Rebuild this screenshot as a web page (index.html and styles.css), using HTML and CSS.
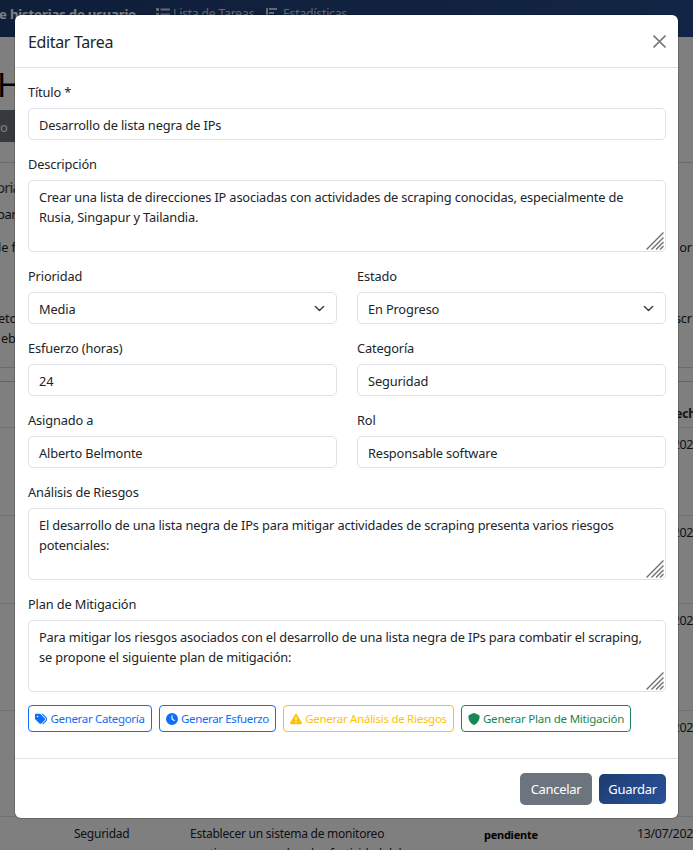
FILE: index.html
```html
<!DOCTYPE html>
<html lang="es">
<head>
<meta charset="utf-8">
<title>Editar Tarea</title>
<link rel="stylesheet" href="styles.css">
</head>
<body>
<div class="page">
  <nav class="navbar">
    <span class="brand">e historias de usuario</span>
    <span class="nav-link nav-tasks"><svg width="14" height="14" viewBox="0 0 14 14"><path d="M0 1h3v3H0zM0 6h3v3H0zM0 11h3v3H0zM4.500 1.500h9.500v2H4.500zM4.500 6.500h9.500v2H4.500zM4.500 11h9.500v2H4.500z"/></svg><span>Lista de Tareas</span></span>
    <span class="nav-link nav-stats"><svg width="12" height="14" viewBox="0 0 12 14"><path d="M0 1h2v13H0zM3 1h8v2H3zM3 5h5v2H3zM3 9h9v2H3z"/></svg><span>Estadísticas</span></span>
  </nav>
  <h1 class="heading">H</h1>
  <div class="toolbar">o</div>
  <section class="story">
    <div class="story-line story-title">oria</div>
    <div class="story-line story-need">par</div>
    <div class="story-line story-wide"><span>le f</span><span>or</span></div>
    <div class="story-line story-goal"><span>eto</span><span>scr</span></div>
    <div class="story-line story-last">eb</div>
  </section>
  <section class="table">
    <div class="row row-head"><b></b><b></b><b></b><b class="date-head">Fecha</b></div>
    <div class="row"><span></span><span></span><span></span><span class="date">13/07/2025</span></div>
    <div class="row"><span></span><span></span><span></span><span class="date">13/07/2025</span></div>
    <div class="row"><span></span><span></span><span></span><span class="date">13/07/2025</span></div>
    <div class="row"><span></span><span></span><span></span><span class="date">13/07/2025</span></div>
    <div class="row"><span>Seguridad</span><span class="desc">Establecer un sistema de monitoreo<br>continuo para evaluar la efectividad del</span><b class="status">pendiente</b><span class="date">13/07/2025</span></div>
  </section>
</div>
<div class="backdrop"></div>
<main class="modal">
  <header class="modal-header">
    <h2 class="modal-title">Editar Tarea</h2>
    <svg class="close" width="13" height="13" viewBox="0 0 13 13"><path d="M.5.5l12 12M12.500.5L.5 12.500"/></svg>
  </header>
  <div class="modal-body">
    <div class="field"><label>Título *</label><div class="control"><span>Desarrollo de lista negra de IPs</span></div></div>
    <div class="field"><label>Descripción</label><div class="control area"><span>Crear una lista de direcciones IP asociadas con actividades de scraping conocidas, especialmente de</span><br><span>Rusia, Singapur y Tailandia.</span><svg class="grip" viewBox="0 0 18 18"><path d="M.5 17.500l17-17M5.500 17.500l12-12M10 17.500l7.500-7.500M14 17.500l3.500-3.500"/></svg></div></div>
    <div class="pair">
      <div class="field"><label>Prioridad</label><div class="control select"><span>Media</span><svg width="11" height="11" viewBox="0 0 16 16"><path d="m2 5 6 6 6-6"/></svg></div></div>
      <div class="field"><label>Estado</label><div class="control select"><span>En Progreso</span><svg width="11" height="11" viewBox="0 0 16 16"><path d="m2 5 6 6 6-6"/></svg></div></div>
    </div>
    <div class="pair">
      <div class="field"><label>Esfuerzo (horas)</label><div class="control"><span>24</span></div></div>
      <div class="field"><label>Categoría</label><div class="control"><span>Seguridad</span></div></div>
    </div>
    <div class="pair">
      <div class="field"><label>Asignado a</label><div class="control"><span>Alberto Belmonte</span></div></div>
      <div class="field"><label>Rol</label><div class="control"><span>Responsable software</span></div></div>
    </div>
    <div class="field"><label>Análisis de Riesgos</label><div class="control area"><span>El desarrollo de una lista negra de IPs para mitigar actividades de scraping presenta varios riesgos</span><br><span>potenciales:</span><svg class="grip" viewBox="0 0 18 18"><path d="M.5 17.500l17-17M5.500 17.500l12-12M10 17.500l7.500-7.500M14 17.500l3.500-3.500"/></svg></div></div>
    <div class="field"><label>Plan de Mitigación</label><div class="control area"><span>Para mitigar los riesgos asociados con el desarrollo de una lista negra de IPs para combatir el scraping,</span><br><span>se propone el siguiente plan de mitigación:</span><svg class="grip" viewBox="0 0 18 18"><path d="M.5 17.500l17-17M5.500 17.500l12-12M10 17.500l7.500-7.500M14 17.500l3.500-3.500"/></svg></div></div>
    <div class="generators">
      <div class="gen gen-category"><svg width="12" height="12" viewBox="0 0 512 512"><path d="M345 39.100L472.800 168.400c52.400 53 52.400 138.200 0 191.200L360.800 472.900c-9.300 9.400-24.500 9.500-33.900.2s-9.500-24.500-.2-33.900L438.600 325.900c33.900-34.300 33.900-89.400 0-123.700L310.900 72.900c-9.300-9.400-9.200-24.600.2-33.900s24.600-9.200 33.900.2zM0 229.500V80C0 53.500 21.500 32 48 32H197.500c17 0 33.300 6.700 45.300 18.700l168 168c25 25 25 65.500 0 90.500L277.300 442.700c-25 25-65.500 25-90.500 0l-168-168C6.700 262.700 0 246.500 0 229.500zM144 144a32 32 0 1 0-64 0 32 32 0 1 0 64 0z"/></svg><span>Generar Categoría</span></div>
      <div class="gen gen-effort"><svg width="12" height="12" viewBox="0 0 512 512"><path d="M256 0a256 256 0 1 1 0 512A256 256 0 1 1 256 0zM232 120V256c0 8 4 15.500 10.700 20l96 64c11 7.400 25.900 4.400 33.300-6.700s4.400-25.900-6.700-33.300L280 243.200V120c0-13.300-10.700-24-24-24s-24 10.700-24 24z"/></svg><span>Generar Esfuerzo</span></div>
      <div class="gen gen-risk"><svg width="12" height="12" viewBox="0 0 512 512"><path d="M256 32c14.200 0 27.300 7.500 34.500 19.800l216 368c7.300 12.400 7.300 27.700.2 40.100S486.300 480 472 480H40c-14.300 0-27.600-7.700-34.700-20.100s-7-27.800.2-40.100l216-368C228.700 39.500 241.800 32 256 32zm0 128c-13.300 0-24 10.700-24 24V296c0 13.300 10.700 24 24 24s24-10.700 24-24V184c0-13.300-10.700-24-24-24zm32 224a32 32 0 1 0-64 0 32 32 0 1 0 64 0z"/></svg><span>Generar Análisis de Riesgos</span></div>
      <div class="gen gen-plan"><svg width="12" height="12" viewBox="0 0 512 512"><path d="M256 0c4.600 0 9.200 1 13.400 2.900L457.700 82.800c22 9.300 38.400 31 38.300 57.200-.5 99.200-41.300 280.700-213.600 363.200-16.700 8-36.100 8-52.800 0C57.300 420.700 16.500 239.200 16 140c-.1-26.200 16.300-47.900 38.300-57.200L242.700 2.900C246.800 1 251.400 0 256 0z"/></svg><span>Generar Plan de Mitigación</span></div>
    </div>
  </div>
  <footer class="modal-footer">
    <div class="btn btn-cancel"><span>Cancelar</span></div>
    <div class="btn btn-save"><span>Guardar</span></div>
  </footer>
</main>
</body>
</html>
```
FILE: styles.css
```css
* { box-sizing: border-box; }
body { margin: 0; width: 693px; height: 850px; overflow: hidden; position: relative; background: #fff; color: #212529; font: 12.800px/20px "Noto Sans", sans-serif; letter-spacing: -.15px; }
h1, h2 { margin: 0; font-weight: 400; }
.page { height: 850px; overflow: hidden; }
.navbar { height: 37px; display: flex; background: linear-gradient(135deg, #1e3c72, #264b8c); color: #fff; line-height: 28px; white-space: nowrap; }
.brand { width: 157px; margin-left: -1px; font-size: 13.200px; font-weight: 700; letter-spacing: -.2px; }
.nav-link { display: flex; align-items: center; gap: 3px; height: 28px; color: #c8d0de; font-size: 12.200px; letter-spacing: -.2px; }
.nav-tasks { width: 110px; }
.nav-stats { gap: 5px; }
.nav-link svg { fill: currentColor; }
.heading { height: 73px; padding-top: 28px; margin-left: -3px; font-size: 33px; line-height: 40px; color: #000; }
.toolbar { width: 60px; height: 32px; background: #6c757d; color: #fff; line-height: 34px; }
.story { margin-top: 20px; height: 206px; padding-top: 14px; border: solid #d6d6d6; border-width: 1px 0; }
.story-line { height: 27px; margin-left: -2px; }
.story-title { margin-left: -4px; font-size: 15px; letter-spacing: -.9px; color: #444; }
.story-need { margin-left: -3px; letter-spacing: -.4px; }
.story-line.story-wide, .story-line.story-goal { display: flex; justify-content: space-between; padding-right: 1px; }
.story-wide { margin-top: 6px; height: 71px; }
.story-goal { height: 20px; }
.story-last { padding-left: 3px; }
.table { margin-top: 13px; border-top: 1px solid #c6c7c8; font-size: 12px; letter-spacing: -.25px; }
.row { display: grid; grid-template-columns: 116px 294px 153px 1fr; height: 88px; padding: 7px 0 0 74px; border-bottom: 1px solid #dee2e6; white-space: nowrap; }
.row-head { height: 46px; padding-top: 22px; }
.date-head { padding-left: 32px; }
.date { font-size: 12.500px; letter-spacing: -.38px; }
.row:nth-child(4) { height: 107px; }
.row:nth-child(5) { height: 106px; }
.status { font-size: 11px; color: #000; line-height: 22px; }
.backdrop { position: absolute; inset: 0; background: rgba(0, 0, 0, .5); }
.modal { position: absolute; left: 15px; top: 15px; width: 663px; height: 803px; border-radius: 6px; background: #fff; box-shadow: 0 0 0 1px rgba(0, 0, 0, .18); }
.modal-header { height: 53px; padding: 0 12px 0 13px; display: flex; align-items: center; justify-content: space-between; border-bottom: 1px solid #dee2e6; }
.modal-title { padding-top: 1px; font-size: 16px; line-height: 24px; letter-spacing: -.35px; }
.close { stroke: #7a7a7a; stroke-width: 1.600; fill: none; }
.modal-body { height: 690px; padding: 14px 12px 0 13px; }
.field { display: flex; flex-direction: column; margin-bottom: 14px; }
.field label { height: 26px; line-height: 21px; letter-spacing: -.15px; }
.control { position: relative; height: 32px; padding: 6px 10px; border: 1px solid #dee2e6; border-radius: 5px; line-height: 20px; white-space: nowrap; }
.area { height: 72px; }
.pair { display: grid; grid-template-columns: 1fr 1fr; gap: 20px; }
.select { display: flex; justify-content: space-between; align-items: center; padding: 7px 11px 5px 10px; }
.select svg { fill: none; stroke: #343a40; stroke-width: 2; stroke-linecap: round; stroke-linejoin: round; margin-top: -2px; }
.grip { position: absolute; right: 1px; bottom: 1px; width: 18px; height: 18px; stroke: #707070; stroke-width: 1.400; }
.generators { display: flex; gap: 7px; margin-top: -1px; }
.gen { display: flex; align-items: center; justify-content: center; gap: 3px; height: 27px; border: 1px solid; border-radius: 4px; font-size: 11.500px; letter-spacing: -.33px; white-space: nowrap; }
.gen svg { fill: currentColor; flex: none; }
.gen-category { width: 124px; color: #0d6efd; }
.gen-effort { width: 117px; color: #0d6efd; letter-spacing: -.37px; }
.gen-risk { width: 171px; color: #ffc107; letter-spacing: -.28px; }
.gen-plan { width: 170px; color: #198754; letter-spacing: -.22px; }
.modal-footer { height: 60px; border-top: 1px solid #dee2e6; padding: 0 12px; display: flex; gap: 7px; align-items: center; justify-content: flex-end; }
.btn { display: flex; align-items: center; justify-content: center; border-radius: 5px; color: #fff; font-size: 13px; letter-spacing: -.3px; }
.btn-cancel { width: 72px; height: 32px; background: #6c757d; }
.btn-save { width: 67px; height: 30px; background: linear-gradient(135deg, #1e3c72, #2a5298); }
```
